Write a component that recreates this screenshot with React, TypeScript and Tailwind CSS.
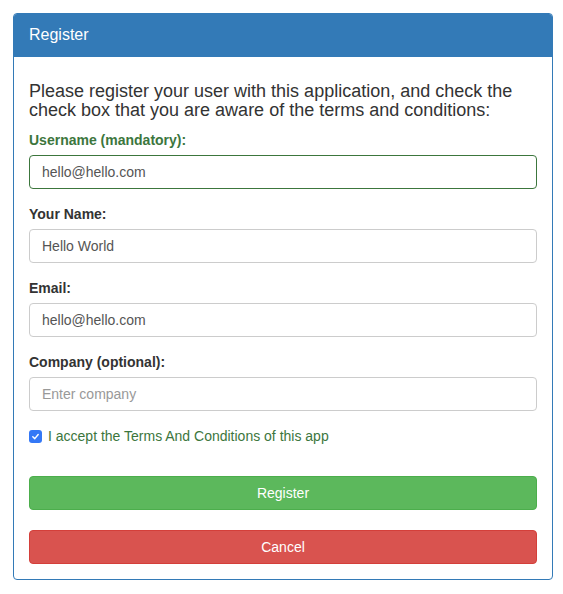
import React from 'react';

interface FieldProps {
  label: string;
  value?: string;
  placeholder?: string;
  success?: boolean;
}

function Field({ label, value, placeholder, success }: FieldProps) {
  return (
    <div className="mb-[15px]">
      <label
        className={`block mb-[5px] text-[14px] leading-[20px] font-bold ${success ? 'text-[#3c763d]' : 'text-[#333]'}`}
      >
        {label}
      </label>
      <input
        type="text"
        defaultValue={value}
        placeholder={placeholder}
        className={`block w-full h-[34px] px-[12px] py-[6px] text-[14px] leading-[20px] text-[#555] bg-white rounded-[4px] border placeholder:text-[#999] outline-none ${
          success ? 'border-[#3c763d]' : 'border-[#ccc]'
        }`}
      />
    </div>
  );
}

export default function App() {
  return (
    <div className="bg-white min-h-[594px] pt-[13px] pl-[13px]" style={{ fontFamily: '"Liberation Sans", Arial, sans-serif' }}>
      <div className="w-[540px] border border-[#337ab7] rounded-[4px] bg-white">
        <div className="bg-[#337ab7] text-white text-[16px] leading-[22px] px-[15px] py-[10px] border-b border-[#337ab7] rounded-t-[3px]">
          Register
        </div>
        <div className="p-[15px]">
          <h4 className="mt-[10px] mb-[10px] text-[18px] leading-[19px] text-[#333] font-normal">
            Please register your user with this application, and check the check box that you are aware of the terms and conditions:
          </h4>
          <Field label="Username (mandatory):" value="hello@hello.com" success />
          <Field label="Your Name:" value="Hello World" />
          <Field label="Email:" value="hello@hello.com" />
          <Field label="Company (optional):" placeholder="Enter company" />
          <label className="flex items-start gap-[6px] text-[14px] leading-[20px] text-[#3c763d]">
            <span className="mt-[4px] w-[13px] h-[13px] rounded-[3px] bg-[#3478f6] flex items-center justify-center shrink-0">
              <svg width="9" height="9" viewBox="0 0 10 10" fill="none">
                <path d="M2 5.2 L4.2 7.4 L8 2.8" stroke="white" strokeWidth="1.6" strokeLinecap="round" strokeLinejoin="round" />
              </svg>
            </span>
            I accept the Terms And Conditions of this app
          </label>
          <div className="mt-[30px] flex flex-col gap-[20px]">
            <button className="h-[34px] w-full rounded-[4px] border border-[#4cae4c] bg-[#5cb85c] text-white text-[14px]">
              Register
            </button>
            <button className="h-[34px] w-full rounded-[4px] border border-[#d43f3a] bg-[#d9534f] text-white text-[14px]">
              Cancel
            </button>
          </div>
        </div>
      </div>
    </div>
  );
}
